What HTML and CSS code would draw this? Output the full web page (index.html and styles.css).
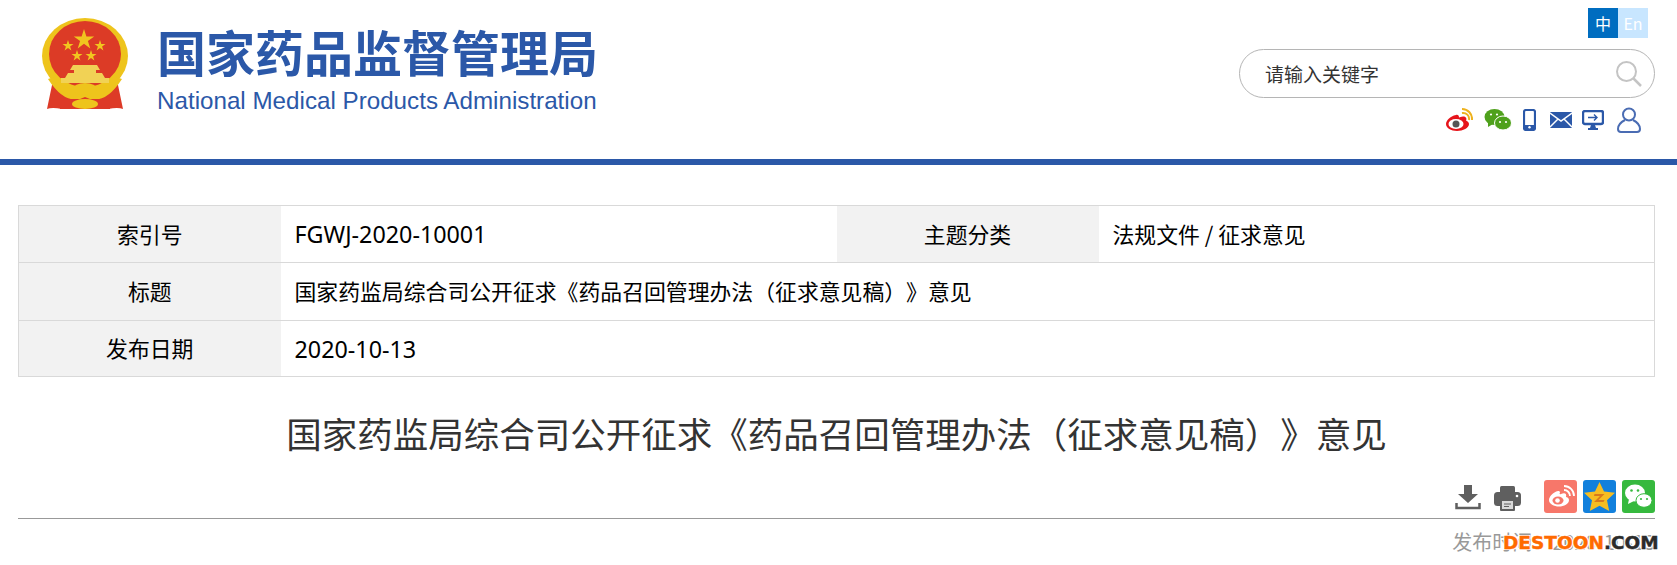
FILE: index.html
```html
<!DOCTYPE html>
<html lang="zh">
<head>
<meta charset="utf-8">
<title>国家药监局综合司公开征求《药品召回管理办法（征求意见稿）》意见</title>
<link rel="stylesheet" href="styles.css">
</head>
<body>
<header class="header">
  <div class="brand">
    <svg class="emblem" viewBox="0 0 90 96" width="90" height="96">
      <path d="M12 68 L7 92 Q12 90 22 92 L68 92 Q78 90 83 92 L78 68 Z" fill="#dd3a27"/>
      <ellipse cx="45" cy="39" rx="43" ry="38" fill="#eec41c"/>
      <ellipse cx="45" cy="37" rx="36" ry="33" fill="#dc3b26"/>
      <path d="M44 12l2.400 7.400h7.800l-6.300 4.600 2.400 7.400-6.300-4.600-6.300 4.600 2.400-7.400-6.300-4.600h7.800z" fill="#f1c61f"/>
      <path d="M28 23l1.300 4h4.200l-3.400 2.500 1.300 4-3.400-2.500-3.400 2.500 1.300-4-3.400-2.500h4.200z" fill="#f1c61f"/>
      <path d="M60 23l1.300 4h4.200l-3.400 2.500 1.300 4-3.400-2.500-3.400 2.500 1.300-4-3.400-2.500h4.200z" fill="#f1c61f"/>
      <path d="M37 33l1.300 4h4.200l-3.400 2.500 1.300 4-3.400-2.500-3.400 2.500 1.300-4-3.400-2.500h4.200z" fill="#f1c61f"/>
      <path d="M51 33l1.300 4h4.200l-3.400 2.500 1.300 4-3.400-2.500-3.400 2.500 1.300-4-3.400-2.500h4.200z" fill="#f1c61f"/>
      <path d="M33 48h24l3 5h-4v3h6l3 5h4v5H21v-5h4l3-5h6v-3h-4z" fill="#f1d255"/>
      <path d="M14 60 Q30 78 45 72 Q60 78 76 60 L82 62 Q64 90 45 80 Q26 90 8 62 Z" fill="#eec41c"/>
      <ellipse cx="45" cy="72" rx="12" ry="6" fill="#eec41c"/>
      <path d="M20 82h50v10H20z" fill="#dd3a27"/>
      <ellipse cx="45" cy="87" rx="13" ry="5" fill="#eec41c"/>
    </svg>
    <div class="brand-text">
      <div class="brand-cn">国家药品监督管理局</div>
      <div class="brand-en">National Medical Products Administration</div>
    </div>
  </div>
  <div class="tools">
    <div class="lang"><span class="lang-cn">中</span><span class="lang-en">En</span></div>
    <div class="search">
      <span class="search-text">请输入关键字</span>
      <svg class="search-icon" viewBox="0 0 28 28" width="28" height="28">
        <circle cx="11.500" cy="11.500" r="9.500" fill="none" stroke="#c4c4c4" stroke-width="2"/>
        <path d="M18.500 18.500L26 26" stroke="#c4c4c4" stroke-width="2.500"/>
      </svg>
    </div>
    <div class="links">
      <svg class="l-weibo" viewBox="0 0 28 24" width="28" height="24">
        <path d="M11 7C5 8 1 13 1 16c0 4 5 7 11 7s12-3 12-7c0-2-2-3-3-3.500 1-2 0-4-3-4-2 0-3 1-4 1 0-2-1-3-3-2.500z" fill="#e6141b"/>
        <ellipse cx="11" cy="16" rx="7.500" ry="5" fill="#fff"/>
        <circle cx="11" cy="16" r="3.500" fill="#555"/>
        <path d="M17 5a6 6 0 0 1 7 7M17 1a10 10 0 0 1 10 11" fill="none" stroke="#eeb21e" stroke-width="2"/>
      </svg>
      <svg class="l-wechat" viewBox="0 0 28 22" width="28" height="22">
        <ellipse cx="10.500" cy="8" rx="10" ry="8" fill="#4fa11c"/>
        <path d="M4 13l0 5 5-3z" fill="#4fa11c"/>
        <ellipse cx="19" cy="14" rx="8.500" ry="7" fill="#4fa11c" stroke="#fff"/>
        <circle cx="7" cy="5.500" r="1.100" fill="#fff"/><circle cx="13" cy="5.500" r="1.100" fill="#fff"/>
        <circle cx="16" cy="13" r="1.100" fill="#fff"/><circle cx="22" cy="13" r="1.100" fill="#fff"/>
      </svg>
      <svg class="l-phone" viewBox="0 0 13 22" width="13" height="22">
        <rect x="1" y="1" width="11" height="20" rx="2" fill="none" stroke="#2b58a8" stroke-width="2.200"/>
        <rect x="1" y="16" width="11" height="5" fill="#2b58a8"/>
        <circle cx="6.500" cy="18.300" r="1.200" fill="#fff"/>
      </svg>
      <svg class="l-mail" viewBox="0 0 22 16" width="22" height="16">
        <rect width="22" height="16" rx="1" fill="#2b58a8"/>
        <path d="M0 1l11 8 11-8M0 15l8-8M22 15l-8-8" fill="none" stroke="#fff" stroke-width="1.500"/>
      </svg>
      <svg class="l-screen" viewBox="0 0 22 20" width="22" height="20">
        <rect x="1" y="1" width="20" height="13" rx="2" fill="#fff" stroke="#2b58a8" stroke-width="2.400"/>
        <path d="M6 7.500h9M12 4.500l3 3-3 3" fill="none" stroke="#2b58a8" stroke-width="1.400"/>
        <path d="M9 15h4l1 3h2v2H6v-2h2z" fill="#2b58a8"/>
      </svg>
      <svg class="l-user" viewBox="0 0 24 26" width="24" height="26">
        <circle cx="12" cy="7.500" r="6" fill="none" stroke="#4a6cb3" stroke-width="2"/>
        <path d="M8 13C4 15 1 18 1 22c0 2 1 3 3 3h16c2 0 3-1 3-3 0-4-3-7-7-9" fill="none" stroke="#4a6cb3" stroke-width="2"/>
      </svg>
    </div>
  </div>
</header>

<main class="main">
  <table class="meta">
    <tr class="row-a">
      <th>索引号</th><td class="latin">FGWJ-2020-10001</td>
      <th>主题分类</th><td>法规文件 / 征求意见</td>
    </tr>
    <tr class="row-b">
      <th>标题</th><td colspan="3">国家药监局综合司公开征求《药品召回管理办法（征求意见稿）》意见</td>
    </tr>
    <tr class="row-c">
      <th>发布日期</th><td colspan="3" class="latin">2020-10-13</td>
    </tr>
  </table>

  <h1 class="title">国家药监局综合司公开征求《药品召回管理办法（征求意见稿）》意见</h1>

  <div class="actions">
    <svg class="a-down" viewBox="0 0 26 26" width="26" height="26">
      <path d="M9 1h8v9h6L13 19 3 10h6z" fill="#5f5f5f"/>
      <path d="M1.500 19v5h23v-5" fill="none" stroke="#5f5f5f" stroke-width="2.500"/>
    </svg>
    <svg class="a-print" viewBox="0 0 27 26" width="27" height="26">
      <rect x="6" y="1" width="15" height="8" rx="1.500" fill="#5f5f5f"/>
      <rect x="0" y="7" width="27" height="14" rx="3.500" fill="#5f5f5f"/>
      <rect x="6" y="14" width="15" height="12" rx="1" fill="#5f5f5f"/>
      <rect x="8" y="16" width="11" height="8" fill="#d9d9d9"/>
      <path d="M10 19h7M10 21.500h5" stroke="#5f5f5f"/>
      <circle cx="23" cy="11" r="1.300" fill="#fff"/>
    </svg>
    <span class="share share-weibo">
      <svg viewBox="0 0 33 33" width="33" height="33">
        <path d="M14 11C9 12 5 17 5 20c0 4 5 6.500 10 6.500S25 24 25 20c0-2-2-3-3-3 1-3-1-5-5-3-1 .5-2 0-1-1.500 0-1.500-1-1.500-2-1.500z" fill="#fff"/>
        <ellipse cx="14" cy="20.500" rx="5.500" ry="4" fill="#f7776a"/>
        <circle cx="13.500" cy="20.500" r="2.300" fill="#fff"/>
        <path d="M20 10a6 6 0 0 1 6 6M20 6a10 10 0 0 1 10 10" fill="none" stroke="#fff" stroke-width="1.800"/>
      </svg>
    </span>
    <span class="share share-qzone">
      <svg viewBox="0 0 33 33" width="33" height="33">
        <path d="M16.500 2l4.500 9.500 11 1.300-8 7.400 2.200 10.800-9.700-5.300-9.700 5.300 2.200-10.800-8-7.400 11-1.300z" fill="#f6bd21"/>
        <path d="M11.500 14h10l-6 6h6l-1 2H11l6-6h-6z" fill="#d8791b"/>
      </svg>
    </span>
    <span class="share share-wechat">
      <svg viewBox="0 0 33 33" width="33" height="33">
        <ellipse cx="13" cy="13" rx="10" ry="8.500" fill="#fff"/>
        <path d="M7 19l-1 5 6-3z" fill="#fff"/>
        <ellipse cx="22" cy="20.500" rx="8" ry="6.800" fill="#fff" stroke="#36b93e"/>
        <circle cx="9.500" cy="10.500" r="1.300" fill="#36b93e"/><circle cx="16" cy="10.500" r="1.300" fill="#36b93e"/>
        <circle cx="19" cy="19" r="1.100" fill="#36b93e"/><circle cx="25" cy="19" r="1.100" fill="#36b93e"/>
      </svg>
    </span>
  </div>

  <div class="time">发布时间：2020-10-13</div>
</main>

<div class="watermark"><span class="wm-orange">DESTOON</span><span class="wm-dark">.COM</span></div>
</body>
</html>
```

FILE: styles.css
```css
* { box-sizing: border-box; }
html, body { margin: 0; padding: 0; }
body {
  height: 565px;
  overflow: hidden;
  position: relative;
  background: #fff;
  color: #000;
  font-family: "Noto Sans CJK SC", "Noto Sans", sans-serif;
  text-spacing-trim: space-all;
}
.header {
  height: 165px;
  border-bottom: 6px solid #2b58a8;
  display: flex;
  justify-content: space-between;
  padding: 8px 22px 0 40px;
}
.brand { display: flex; align-items: flex-start; padding-top: 9px; }
.emblem { display: block; flex: none; }
.brand-text { margin-left: 27px; padding-top: 7px; width: 445px; }
.brand-cn {
  color: #2b58a8;
  font-size: 49px;
  font-weight: 700;
  line-height: 54px;
  white-space: nowrap;
}
.brand-en {
  color: #2b58a8;
  font-family: "Liberation Sans", Arial, sans-serif;
  font-size: 24.200px;
  line-height: 28px;
  margin-top: 9px;
  white-space: nowrap;
}
.tools { width: 416px; display: flex; flex-direction: column; }
.lang { display: flex; justify-content: flex-end; padding-right: 7px; }
.lang span {
  width: 30px;
  height: 30px;
  color: #fff;
  font-size: 16px;
  line-height: 30px;
  text-align: center;
}
.lang-cn { background: #006dc0; }
.lang-en { background: #c8e6ff; }
.search {
  margin-top: 11px;
  height: 49px;
  border: 1px solid #b5b5b5;
  border-radius: 25px;
  display: flex;
  align-items: center;
  justify-content: space-between;
  padding: 0 11px 0 25px;
}
.search-text { font-size: 19px; color: #333; }
.search-icon { display: block; }
.links {
  margin-top: 9px;
  display: flex;
  align-items: center;
  justify-content: flex-end;
  padding-right: 14px;
}
.links svg { display: block; flex: none; }
.l-wechat { margin-left: 11px; }
.l-phone { margin-left: 11px; }
.l-mail { margin-left: 14px; }
.l-screen { margin-left: 10px; }
.l-user { margin-left: 13px; }

.main { padding: 40px 22px 0 18px; }
.meta {
  width: 100%;
  table-layout: fixed;
  border-collapse: collapse;
  font-size: 21.850px;
}
.meta th, .meta td {
  border-top: 1px solid #d9d9d9;
  border-bottom: 1px solid #d9d9d9;
  padding: 0 0 2px;
}
.row-a th, .row-a td { height: 57px; }
.row-b th, .row-b td { height: 58px; }
.row-c th, .row-c td { height: 56px; }
.meta th {
  width: 262px;
  background: #f2f2f2;
  font-weight: 400;
  text-align: center;
}
.meta td { padding-left: 14px; }
.meta .latin {
  font-family: "Noto Sans", "Noto Sans CJK SC", sans-serif;
  font-size: 23.300px;
  padding-bottom: 0;
}
.meta tr > :first-child { border-left: 1px solid #d9d9d9; }
.meta tr > :last-child { border-right: 1px solid #d9d9d9; }
.title {
  margin: 26px 0 0;
  color: #333;
  font-size: 35.500px;
  font-weight: 400;
  line-height: 60px;
  text-align: center;
}
.actions {
  margin-top: 17px;
  height: 39px;
  border-bottom: 1px solid #999;
  display: flex;
  justify-content: flex-end;
  align-items: flex-start;
}
.actions svg { display: block; }
.a-down { margin-top: 4px; }
.a-print { margin: 5px 0 0 13px; }
.share {
  width: 33px;
  height: 33px;
  border-radius: 3px;
  margin-left: 6px;
  display: block;
}
.share-weibo { background: #f7776a; margin-left: 23px; }
.share-qzone { background: #1280dc; }
.share-wechat { background: #36b93e; }
.time {
  margin-top: 9px;
  color: #999;
  font-size: 20px;
  line-height: 28px;
  text-align: right;
}
.watermark {
  position: absolute;
  left: 1503px;
  top: 530px;
  font-family: "DejaVu Sans", sans-serif;
  font-size: 18.500px;
  font-weight: 700;
  line-height: 26px;
  -webkit-text-stroke: 0.4px currentColor;
  text-shadow: 1px 1px 0 #fff, -1px -1px 0 #fff, 1px -1px 0 #fff, -1px 1px 0 #fff;
  white-space: nowrap;
}
.wm-orange { color: #ff6a00; }
.wm-dark { color: #2b2b2b; }
```
